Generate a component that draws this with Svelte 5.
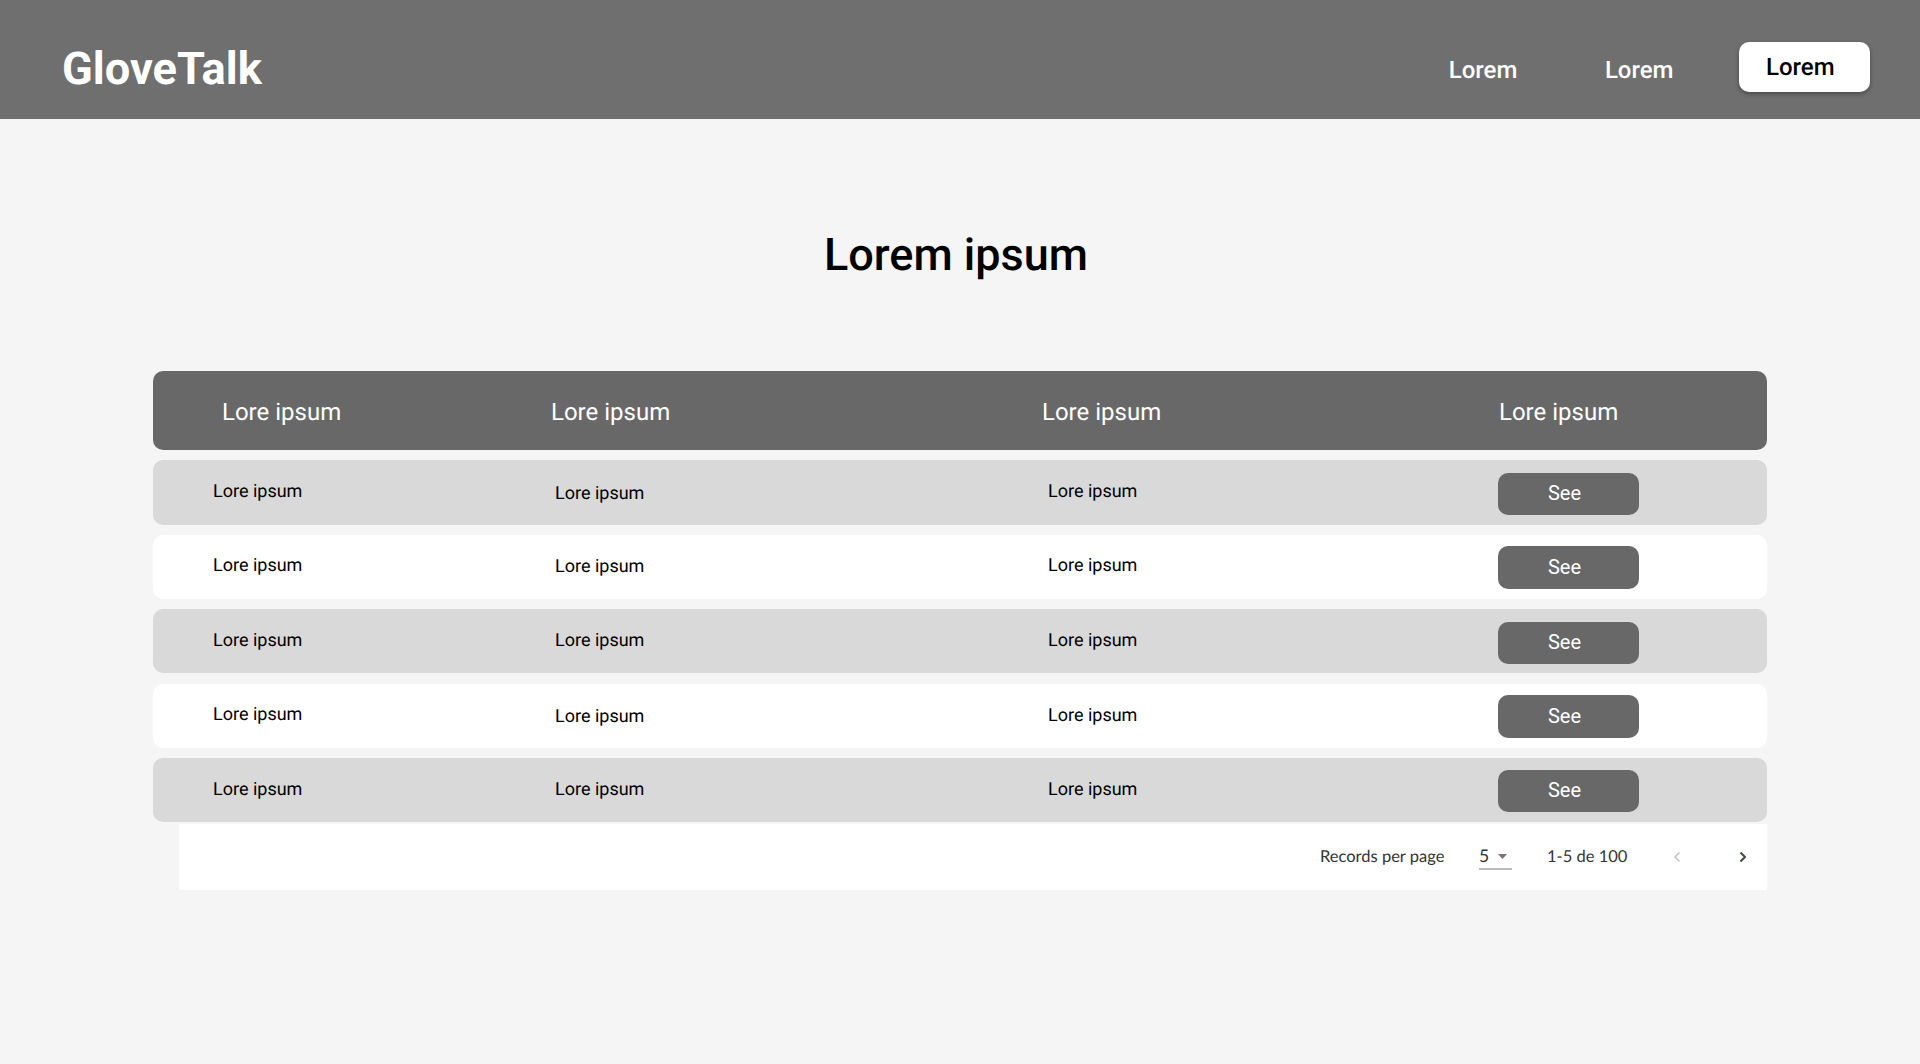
<script lang="ts">
	const links = ['Lorem', 'Lorem'];
	const columns = ['Lore ipsum', 'Lore ipsum', 'Lore ipsum', 'Lore ipsum'];
	// the rows aren't perfectly even in the mock, so keep the offsets per row
	const rows = [
		{ height: 65, top: 0, text: [21, 23, 21], button: 13, buttonHeight: 42 },
		{ height: 64, top: 0, text: [20, 21, 20], button: 11, buttonHeight: 43 },
		{ height: 64, top: 0, text: [21, 21, 21], button: 13, buttonHeight: 42 },
		{ height: 64, top: 1, text: [20, 22, 21], button: 11, buttonHeight: 43 },
		{ height: 64, top: 0, text: [21, 21, 21], button: 12, buttonHeight: 42 }
	];
</script>

<div class="page">
	<header class="topbar">
		<span class="logo">GloveTalk</span>
		<nav class="nav">
			{#each links as link}
				<a class="nav-link" href="#top">{link}</a>
			{/each}
			<a class="nav-button" href="#top">Lorem</a>
		</nav>
	</header>

	<main class="content">
		<h1 class="title">Lorem ipsum</h1>

		<section class="table">
			<div class="table-head">
				{#each columns as column}
					<span>{column}</span>
				{/each}
			</div>

			{#each rows as row, i}
				<div
					class="table-row"
					class:shaded={i % 2 === 0}
					style="height: {row.height}px; margin-top: {row.top}px"
				>
					{#each row.text as offset}
						<span style="padding-top: {offset}px">Lore ipsum</span>
					{/each}
					<button
						class="see"
						style="margin-top: {row.button}px; height: {row.buttonHeight}px"
					>See</button>
				</div>
			{/each}

			<footer class="pager">
				<span class="records">Records per page</span>
				<span class="select">
					5
					<svg width="9" height="5" viewBox="0 0 9 5"><path d="M0 0h9L4.5 5z" fill="#757575" /></svg>
				</span>
				<span class="range">1-5 de 100</span>
				<svg class="prev" width="8" height="12" viewBox="0 0 8 12">
					<path d="M6.5 1.5 2 6l4.5 4.5" fill="none" stroke="#c4c4c4" stroke-width="1.6" />
				</svg>
				<svg class="next" width="8" height="12" viewBox="0 0 8 12">
					<path d="M1.5 1.5 6 6l-4.5 4.5" fill="none" stroke="#3d4a3d" stroke-width="2" />
				</svg>
			</footer>
		</section>
	</main>
</div>

<style>
	:global(body) {
		background: #f5f5f5;
		font-family: Roboto, "Liberation Sans", sans-serif;
		text-rendering: geometricPrecision;
	}

	.page {
		min-height: 1064px;
	}

	.topbar {
		height: 119px;
		background: #6f6f6f;
		display: flex;
		align-items: center;
		justify-content: space-between;
		padding: 0 50px 0 62px;
		box-sizing: border-box;
	}

	.logo {
		color: #fff;
		font-size: 45.2px;
		font-weight: 700;
		line-height: 1;
		margin-top: 20px;
	}

	.nav {
		display: flex;
		align-items: center;
	}

	.nav-link {
		color: #fff;
		font-size: 24px;
		font-weight: 500;
		text-decoration: none;
		margin-right: 87.5px;
		margin-top: 20px;
	}

	.nav-link:nth-child(2) {
		margin-right: 65.5px;
	}

	.nav-button {
		width: 131px;
		height: 50px;
		box-sizing: border-box;
		padding: 11px 0 0 27px;
		margin-top: 15px;
		background: #fff;
		border-radius: 10px;
		color: #000;
		font-size: 24px;
		font-weight: 500;
		text-decoration: none;
		box-shadow: 0 2px 4px rgba(0, 0, 0, 0.35);
	}

	.content {
		padding: 0 153px;
	}

	.title {
		margin: 0;
		padding: 105px 8px 0 0;
		height: 147px;
		box-sizing: border-box;
		text-align: center;
		color: #000;
		font-size: 45px;
		font-weight: 500;
		line-height: 62px;
	}

	.table {
		display: flex;
		flex-direction: column;
		gap: 10px;
		padding-top: 105px;
	}

	.table-head {
		height: 79px;
		background: #686868;
		border-radius: 10px;
		color: #fff;
		font-size: 24px;
		display: grid;
		grid-template-columns: 329px 491px 457px 1fr;
		align-items: center;
		padding: 2px 0 0 69px;
		box-sizing: border-box;
	}

	.table-row {
		background: #fff;
		border-radius: 10px;
		color: #000;
		font-size: 18px;
		display: grid;
		grid-template-columns: 342px 493px 450px 1fr;
		align-items: start;
		padding-left: 60px;
		box-sizing: border-box;
	}

	.table-row.shaded {
		background: #d9d9d9;
	}

	.see {
		width: 141px;
		background: #686868;
		border: 0;
		border-radius: 10px;
		color: #fff;
		font-family: inherit;
		font-size: 20px;
		padding: 0 8px 2px 0;
	}

	.pager {
		height: 66px;
		margin: -8px 0 0 26px;
		background: #fff;
		display: flex;
		align-items: center;
		padding-left: 1141px;
		font-family: Lato, "Noto Sans", sans-serif;
		font-size: 16.5px;
		color: #333;
	}

	.records {
		width: 159px;
		margin-top: -2px;
	}

	.select {
		width: 33px;
		height: 30px;
		line-height: 24px;
		box-sizing: border-box;
		border-bottom: 2px solid #bbb;
		margin: -4px 35px 0 0;
		display: flex;
		align-items: center;
		justify-content: space-between;
		padding: 4px 5px 0 0;
		font-size: 17.5px;
	}

	.range {
		width: 126px;
		margin-top: -2px;
	}

	.prev {
		margin-right: 58px;
	}
</style>
